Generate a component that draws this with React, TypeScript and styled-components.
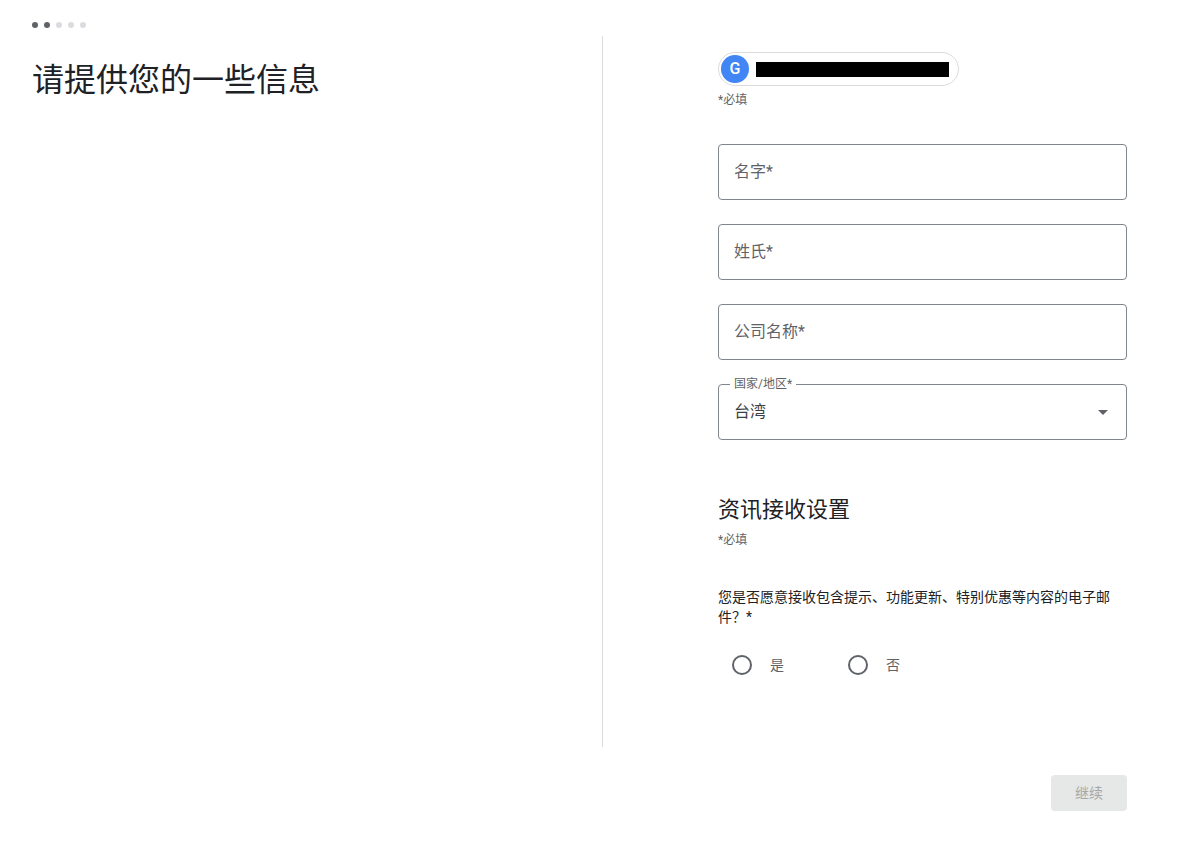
import { useState } from "react";
import type { ReactNode } from "react";
import styled, { createGlobalStyle } from "styled-components";

const GlobalStyle = createGlobalStyle`
  *, *::before, *::after { box-sizing: border-box; }
  body {
    margin: 0;
    background: #fff;
    color: #202124;
    font-family: Roboto, "Noto Sans CJK SC", sans-serif;
    font-size: 14px;
    line-height: 20px;
  }
  input, select, button { font: inherit; }
`;

const Page = styled.div`
  padding: 22px 66px 32px 32px;
`;

const Steps = styled.div`
  display: flex;
  gap: 6px;
  margin-bottom: 8px;
`;

const Step = styled.span<{ $done: boolean }>`
  width: 6px;
  height: 6px;
  border-radius: 50%;
  background: ${(p) => (p.$done ? "#5f6368" : "#dadce0")};
`;

const Columns = styled.main`
  display: grid;
  grid-template-columns: 38fr 35fr;
`;

const Intro = styled.section`
  padding: 22px 32px 0 0;
`;

const Title = styled.h1`
  margin: 0;
  font-size: 32px;
  line-height: 44px;
  font-weight: 400;
`;

const Form = styled.form`
  min-width: 0;
  border-left: 1px solid #dadce0;
  padding: 16px 0 72px 115px;
`;

const Account = styled.div`
  display: inline-flex;
  align-items: center;
  gap: 7px;
  height: 34px;
  padding: 0 9px 0 2px;
  border: 1px solid #dadce0;
  border-radius: 17px;
  vertical-align: top;
`;

const Avatar = styled.span`
  width: 28px;
  height: 28px;
  border-radius: 50%;
  background: #4285f4;
  color: #fff;
  font-size: 16px;
  font-weight: 500;
  line-height: 28px;
  text-align: center;
`;

const Redacted = styled.span`
  width: 193px;
  height: 15px;
  background: #000;
`;

const Required = styled.p`
  margin: 4px 0 0;
  color: #5f6368;
  font-size: 12px;
  line-height: 20px;
`;

const Fields = styled.div`
  display: grid;
  gap: 24px;
  margin-top: 34px;
`;

const Field = styled.div`
  position: relative;
  display: grid;
`;

const FieldLabel = styled.label<{ $raised: boolean }>`
  position: absolute;
  left: 12px;
  top: ${(p) => (p.$raised ? "-10px" : "16px")};
  padding: 0 4px;
  background: #fff;
  color: #5f6368;
  font-size: ${(p) => (p.$raised ? "12px" : "16px")};
  line-height: ${(p) => (p.$raised ? "20px" : "24px")};
  pointer-events: none;
`;

const TextInput = styled.input`
  width: 100%;
  height: 56px;
  padding: 0 15px;
  border: 1px solid #80868b;
  border-radius: 4px;
  background: #fff;
  color: #3c4043;
  font-size: 16px;
  outline-color: #1a73e8;
`;

const Select = styled.select`
  appearance: none;
  width: 100%;
  height: 56px;
  padding: 0 40px 0 15px;
  border: 1px solid #80868b;
  border-radius: 4px;
  background: #fff;
  color: #3c4043;
  font-size: 16px;
  line-height: 24px;
  outline-color: #1a73e8;
`;

const Arrow = styled.svg`
  position: absolute;
  right: 19px;
  top: 26px;
  pointer-events: none;
`;

const Subtitle = styled.h2`
  margin: 54px 0 0;
  font-size: 22px;
  line-height: 32px;
  font-weight: 400;
`;

const Question = styled.fieldset`
  margin: 37px 0 0;
  padding: 0;
  border: 0;
`;

const Legend = styled.legend`
  padding: 0;
`;

const Options = styled.div`
  display: flex;
  gap: 64px;
  padding: 28px 14px 0;
`;

const Option = styled.label`
  display: flex;
  align-items: center;
  gap: 18px;
  color: #5f6368;
`;

const Radio = styled.input`
  appearance: none;
  width: 20px;
  height: 20px;
  margin: 0;
  border: 2px solid #5f6368;
  border-radius: 50%;

  &:checked {
    border-color: #1a73e8;
    background: radial-gradient(#1a73e8 5px, #fff 6px);
  }
`;

const Footer = styled.footer`
  display: flex;
  justify-content: flex-end;
  margin-top: 28px;
`;

const Continue = styled.button`
  height: 36px;
  padding: 0 24px;
  border: 0;
  border-radius: 4px;
  background: #e6e8e7;
  color: #a6a8a8;
`;

function TextField({ id, children }: { id: string; children: ReactNode }) {
  const [value, setValue] = useState("");
  const [focused, setFocused] = useState(false);
  return (
    <Field>
      <TextInput
        id={id}
        type="text"
        value={value}
        onChange={(e) => setValue(e.target.value)}
        onFocus={() => setFocused(true)}
        onBlur={() => setFocused(false)}
      />
      <FieldLabel htmlFor={id} $raised={focused || value !== ""}>
        {children}
      </FieldLabel>
    </Field>
  );
}

export default function App() {
  return (
    <>
      <GlobalStyle />
      <Page>
        <Steps>
          {[true, true, false, false, false].map((done, i) => (
            <Step key={i} $done={done} />
          ))}
        </Steps>
        <Columns>
          <Intro>
            <Title>请提供您的一些信息</Title>
          </Intro>
          <Form id="details">
            <Account>
              <Avatar>G</Avatar>
              <Redacted />
            </Account>
            <Required>*必填</Required>
            <Fields>
              <TextField id="first-name">名字*</TextField>
              <TextField id="last-name">姓氏*</TextField>
              <TextField id="company">公司名称*</TextField>
              <Field>
                <Select id="country" defaultValue="TW">
                  <option value="TW">台湾</option>
                </Select>
                <FieldLabel htmlFor="country" $raised>
                  国家/地区*
                </FieldLabel>
                <Arrow width="10" height="5" viewBox="0 0 10 5" aria-hidden="true">
                  <path d="M0 0h10L5 5z" fill="#5f6368" />
                </Arrow>
              </Field>
            </Fields>
            <Subtitle>资讯接收设置</Subtitle>
            <Required>*必填</Required>
            <Question>
              <Legend>您是否愿意接收包含提示、功能更新、特别优惠等内容的电子邮件？*</Legend>
              <Options>
                <Option>
                  <Radio type="radio" name="emails" value="yes" />是
                </Option>
                <Option>
                  <Radio type="radio" name="emails" value="no" />否
                </Option>
              </Options>
            </Question>
          </Form>
        </Columns>
        <Footer>
          <Continue type="submit" form="details" disabled>
            继续
          </Continue>
        </Footer>
      </Page>
    </>
  );
}
